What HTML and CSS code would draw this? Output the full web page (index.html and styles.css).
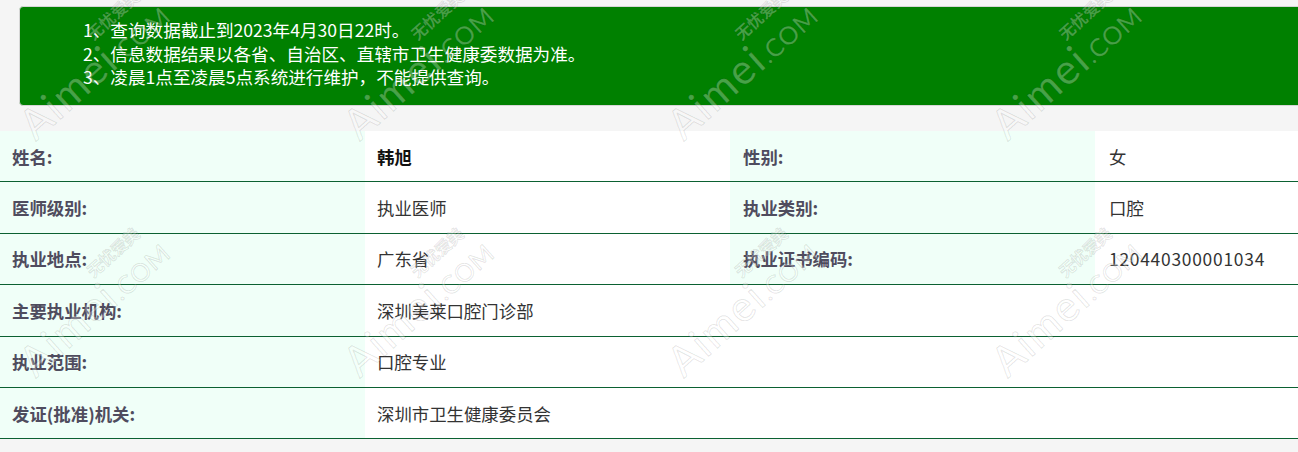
FILE: index.html
```html
<!DOCTYPE html>
<html lang="zh-CN">
<head>
<meta charset="utf-8">
<title>医师执业信息查询</title>
<link rel="stylesheet" href="styles.css">
</head>
<body>
<div class="page">
  <div class="notice">
    <p class="notice-line">1、查询数据截止到2023年4月30日22时。</p>
    <p class="notice-line">2、信息数据结果以各省、自治区、直辖市卫生健康委数据为准。</p>
    <p class="notice-line">3、凌晨1点至凌晨5点系统进行维护，不能提供查询。</p>
  </div>

  <div class="info">
    <div class="row">
      <div class="cell label">姓名:</div>
      <div class="cell value name">韩旭</div>
      <div class="cell label">性别:</div>
      <div class="cell value">女</div>
    </div>
    <div class="row">
      <div class="cell label">医师级别:</div>
      <div class="cell value">执业医师</div>
      <div class="cell label">执业类别:</div>
      <div class="cell value">口腔</div>
    </div>
    <div class="row">
      <div class="cell label">执业地点:</div>
      <div class="cell value">广东省</div>
      <div class="cell label">执业证书编码:</div>
      <div class="cell value code">120440300001034</div>
    </div>
    <div class="row">
      <div class="cell label">主要执业机构:</div>
      <div class="cell value wide">深圳美莱口腔门诊部</div>
    </div>
    <div class="row">
      <div class="cell label">执业范围:</div>
      <div class="cell value wide">口腔专业</div>
    </div>
    <div class="row">
      <div class="cell label">发证(批准)机关:</div>
      <div class="cell value wide">深圳市卫生健康委员会</div>
    </div>
  </div>

  <div class="watermarks" aria-hidden="true">
    <div class="wm"><div class="wm-text"><span class="wm-cn">无忧爱美</span><span class="wm-en"><span class="wm-big">Aimei</span><span class="wm-small">.COM</span></span></div></div>
    <div class="wm"><div class="wm-text"><span class="wm-cn">无忧爱美</span><span class="wm-en"><span class="wm-big">Aimei</span><span class="wm-small">.COM</span></span></div></div>
    <div class="wm"><div class="wm-text"><span class="wm-cn">无忧爱美</span><span class="wm-en"><span class="wm-big">Aimei</span><span class="wm-small">.COM</span></span></div></div>
    <div class="wm"><div class="wm-text"><span class="wm-cn">无忧爱美</span><span class="wm-en"><span class="wm-big">Aimei</span><span class="wm-small">.COM</span></span></div></div>
    <div class="wm"><div class="wm-text"><span class="wm-cn">无忧爱美</span><span class="wm-en"><span class="wm-big">Aimei</span><span class="wm-small">.COM</span></span></div></div>
    <div class="wm"><div class="wm-text"><span class="wm-cn">无忧爱美</span><span class="wm-en"><span class="wm-big">Aimei</span><span class="wm-small">.COM</span></span></div></div>
    <div class="wm"><div class="wm-text"><span class="wm-cn">无忧爱美</span><span class="wm-en"><span class="wm-big">Aimei</span><span class="wm-small">.COM</span></span></div></div>
    <div class="wm"><div class="wm-text"><span class="wm-cn">无忧爱美</span><span class="wm-en"><span class="wm-big">Aimei</span><span class="wm-small">.COM</span></span></div></div>
  </div>
</div>
</body>
</html>
```

FILE: styles.css
```css
html, body {
  margin: 0;
  padding: 0;
  overflow: hidden;
  background: #f5f5f5;
}

body {
  font-family: "Noto Sans CJK SC", "Noto Sans", "Liberation Sans", sans-serif;
  color: #333;
}

.page {
  position: relative;
  width: 1460px;
  min-height: 452px;
  padding-top: 6px;
  box-sizing: border-box;
}

.notice {
  margin: 0 19px;
  height: 100px;
  box-sizing: border-box;
  background: #008000;
  border: 1px solid #d6d6d6;
  border-radius: 4px;
  padding: 11px 0 0 63px;
  color: #fff;
  font-size: 17.6px;
  line-height: 23.5px;
}

.notice-line {
  margin: 0;
  white-space: nowrap;
}

.info {
  margin-top: 25px;
  background: #fff;
}

.row {
  display: grid;
  grid-template-columns: 365px 365px 365px 365px;
  height: 51.4px;
  box-sizing: border-box;
  border-bottom: 1px solid #0b6132;
}

.cell {
  display: flex;
  align-items: center;
  font-size: 17.4px;
  white-space: nowrap;
}

.label {
  background: #f0fff8;
  padding-left: 12px;
  font-weight: 700;
  color: #4f4c5e;
}

.row .label:nth-child(3) {
  padding-left: 13px;
}

.value {
  padding-left: 12px;
  color: #333;
}

.row .value:nth-child(4) {
  padding-left: 14px;
}

.value.code {
  letter-spacing: 0.75px;
}

.value.name {
  font-weight: 700;
  color: #111;
}

.value.wide {
  grid-column: 2 / span 3;
}

/* watermark overlay */
.watermarks {
  position: absolute;
  top: 0;
  left: 0;
  right: 0;
  bottom: 0;
  pointer-events: none;
  display: grid;
  grid-template-columns: repeat(4, 324px);
  grid-auto-rows: 237px;
  padding: 5px 0 0 25px;
  overflow: hidden;
}

.wm {
  width: 130px;
  height: 130px;
  display: flex;
  align-items: center;
  justify-content: center;
}

.wm-text {
  flex: none;
  display: flex;
  flex-direction: column;
  align-items: flex-end;
  transform: rotate(-42deg) translate(4px, -4px);
  font-family: "Lato", "Open Sans", sans-serif;
  color: rgba(255, 255, 255, 0.3);
  -webkit-text-stroke: 1px rgba(0, 0, 0, 0.11);
  white-space: nowrap;
}

.wm-cn {
  font-family: "Noto Sans CJK SC", sans-serif;
  font-size: 16px;
  line-height: 16px;
  font-weight: 700;
  margin-right: 10px;
  margin-bottom: -1px;
}

.wm-en {
  display: flex;
  align-items: baseline;
  line-height: 40px;
}

.wm-big {
  font-size: 42px;
  letter-spacing: 2px;
}

.wm-small {
  font-size: 25px;
  letter-spacing: 1px;
}
```
